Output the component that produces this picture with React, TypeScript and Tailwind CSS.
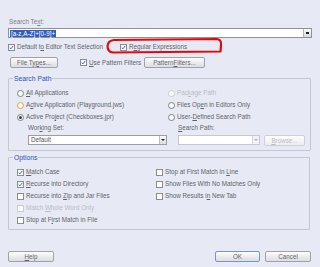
import React from 'react';

const font = { fontFamily: '"Liberation Sans", Arial, sans-serif' };

function Check() {
  return (
    <svg viewBox="0 0 7 7" className="w-[5px] h-[5px]">
      <path d="M1 3.6 L2.8 5.4 L6 1.2" fill="none" stroke="#2d55c8" strokeWidth="1.3" />
    </svg>
  );
}

function Checkbox({ checked = false, disabled = false }: { checked?: boolean; disabled?: boolean }) {
  return (
    <span
      className={`w-[7px] h-[7px] shrink-0 flex items-center justify-center bg-white border ${
        disabled ? 'border-[#c9ccd4]' : 'border-[#8a8d94]'
      }`}
    >
      {checked && <Check />}
    </span>
  );
}

function Radio({ on = false, hover = false, disabled = false }: { on?: boolean; hover?: boolean; disabled?: boolean }) {
  return (
    <span
      className={`w-[7px] h-[7px] shrink-0 rounded-full bg-white flex items-center justify-center border ${
        hover ? 'border-[#e0a826] border-[1.5px]' : disabled ? 'border-[#c9ccd4]' : 'border-[#7d8088]'
      }`}
    >
      {on && <span className="w-[3px] h-[3px] rounded-full bg-[#3a3d45]" />}
    </span>
  );
}

function Btn({ children, className = '', primary = false }: { children: React.ReactNode; className?: string; primary?: boolean }) {
  return (
    <div
      className={`h-[11px] flex items-center justify-center rounded-[2px] border bg-gradient-to-b from-[#fdfdfd] to-[#dcdde2] text-[6.3px] text-[#64666d] ${
        primary ? 'border-[#7e92c4]' : 'border-[#9fa2a8]'
      } ${className}`}
    >
      {children}
    </div>
  );
}

function Combo({ className = '', disabled = false, children }: { className?: string; disabled?: boolean; children?: React.ReactNode }) {
  return (
    <div className={`h-[10px] flex bg-white border ${disabled ? 'border-[#c5c8cf]' : 'border-[#9a9da4]'} ${className}`}>
      <div className="flex-1 flex items-center pl-[2px] text-[6.3px] text-[#54565d] overflow-hidden whitespace-nowrap">
        {children}
      </div>
      <div
        className={`w-[7px] flex items-center justify-center border-l ${
          disabled ? 'border-[#d6d8de] bg-[#f1f2f5]' : 'border-[#b8bbc2] bg-gradient-to-b from-[#fbfbfb] to-[#dcdde2]'
        }`}
      >
        <span
          className={`w-0 h-0 border-l-[2px] border-r-[2px] border-t-[2px] border-l-transparent border-r-transparent ${
            disabled ? 'border-t-[#b3b6bd]' : 'border-t-[#222]'
          }`}
        />
      </div>
    </div>
  );
}

function Row({ children, className = '' }: { children: React.ReactNode; className?: string }) {
  return <div className={`h-[12px] flex items-center gap-[2px] ${className}`}>{children}</div>;
}

function U({ children }: { children: React.ReactNode }) {
  return <span className="underline underline-offset-[1px]">{children}</span>;
}

export default function App() {
  return (
    <div
      style={font}
      className="relative w-[320px] h-[267px] overflow-hidden bg-[#e7eaf5] text-[6.3px] text-[#606269] pl-[8px] pt-[18px] flex flex-col"
    >
      <div className="h-[8px] leading-[8px] ml-[1px] text-[#7a7c83]">Search Te<U>x</U>t:</div>

      <div className="mt-[2px] w-[304px] h-[10px] flex bg-white border border-[#8f9298]">
        <div className="flex-1 flex items-center pl-[1px]">
          <span className="bg-[#2f5cc4] text-white px-[1px] leading-[7px]">[a-z,A-Z]+[0-9]+</span>
        </div>
        <div className="w-[8px] flex items-center justify-center border-l border-[#b6b9c0] bg-gradient-to-b from-[#fbfbfb] to-[#d9dae0]">
          <span className="w-[3px] h-[2px] bg-[#222]" />
        </div>
      </div>

      <div className="mt-[5px] h-[8px] flex items-center">
        <div className="flex items-center gap-[2px] w-[112px]">
          <Checkbox checked />
          <span>Default t<U>o</U> Editor Text Selection</span>
        </div>
        <div className="flex items-center gap-[2px]">
          <Checkbox checked />
          <span>R<U>e</U>gular Expressions</span>
        </div>
      </div>

      <div className="mt-[6px] flex items-center">
        <Btn className="ml-[2px] w-[48px]">File Ty<U>p</U>es...</Btn>
        <div className="ml-[22px] w-[64px] flex items-center gap-[2px]">
          <Checkbox checked />
          <span><U>U</U>se Pattern Filters</span>
        </div>
        <Btn className="w-[61px]">Pattern <U>F</U>ilters...</Btn>
      </div>

      {/* Search Path */}
      <div className="relative mt-[10px] w-[303px] h-[73px] border border-[#c3c7d2] rounded-[1px] pt-[8px] pl-[8px] flex">
        <span className="absolute -top-[5px] left-[4px] px-[1px] bg-[#e7eaf5] text-[6.8px] leading-[9px] text-[#2d4fb5]">
          Search Path
        </span>
        <div className="w-[151px] flex flex-col">
          <Row>
            <Radio />
            <span><U>A</U>ll Applications</span>
          </Row>
          <Row>
            <Radio hover />
            <span>A<U>c</U>tive Application (Playground.jws)</span>
          </Row>
          <Row>
            <Radio on />
            <span>Active Pro<U>j</U>ect (Checkboxes.jpr)</span>
          </Row>
          <div className="h-[9px] leading-[9px] pl-[11px]">Wor<U>k</U>ing Set:</div>
          <Combo className="mt-[3px] ml-[11px] w-[139px]">Default</Combo>
        </div>
        <div className="flex flex-col">
          <Row className="text-[#b9bcc4]">
            <Radio disabled />
            <span>Pac<U>k</U>age Path</span>
          </Row>
          <Row>
            <Radio />
            <span>Files Op<U>e</U>n in Editors Only</span>
          </Row>
          <Row>
            <Radio />
            <span>User-<U>D</U>efined Search Path</span>
          </Row>
          <div className="h-[9px] leading-[9px] pl-[10px]"><U>S</U>earch Path:</div>
          <div className="mt-[3px] ml-[10px] flex gap-[4px]">
            <Combo disabled className="w-[82px]" />
            <Btn className="w-[41px] h-[10px] text-[#b9bcc4] border-[#cdd0d6] from-[#f3f4f7] to-[#eceef2]">
              <U>B</U>rowse...
            </Btn>
          </div>
        </div>
      </div>

      {/* Options */}
      <div className="relative mt-[6px] w-[302px] h-[73px] border border-[#c3c7d2] rounded-[1px] pt-[8px] pl-[8px] flex">
        <span className="absolute -top-[5px] left-[4px] px-[1px] bg-[#e7eaf5] text-[6.8px] leading-[9px] text-[#2d4fb5]">
          Options
        </span>
        <div className="w-[139px] flex flex-col">
          <Row>
            <Checkbox checked />
            <span><U>M</U>atch Case</span>
          </Row>
          <Row>
            <Checkbox checked />
            <span><U>R</U>ecurse into Directory</span>
          </Row>
          <Row>
            <Checkbox />
            <span>Recurse into <U>Z</U>ip and Jar Files</span>
          </Row>
          <Row className="text-[#b9bcc4]">
            <Checkbox disabled />
            <span>Match <U>W</U>hole Word Only</span>
          </Row>
          <Row>
            <Checkbox />
            <span>Stop at F<U>i</U>rst Match in File</span>
          </Row>
        </div>
        <div className="flex flex-col">
          <Row>
            <Checkbox />
            <span>Stop at First Match in <U>L</U>ine</span>
          </Row>
          <Row>
            <Checkbox />
            <span>Show Files With No Matches Only</span>
          </Row>
          <Row>
            <Checkbox />
            <span>Show Results i<U>n</U> New Tab</span>
          </Row>
        </div>
      </div>

      <div className="mt-[21px] w-[303px] flex items-center">
        <Btn className="w-[46px]"><U>H</U>elp</Btn>
        <div className="flex-1" />
        <Btn primary className="w-[45px]">OK</Btn>
        <Btn className="ml-[5px] w-[46px]">Cancel</Btn>
      </div>

      {/* red marker annotation */}
      <svg className="absolute left-0 top-0 w-[320px] h-[267px] pointer-events-none" viewBox="0 0 320 267">
        <path
          d="M114 40 L217 39 Q221.5 39.5 221 45 L220.5 51.5 L113 52.5 Q107.5 52 107.5 46 Q108 40.5 114 40 Z"
          fill="none"
          stroke="#e10a0a"
          strokeWidth="2.2"
          strokeLinejoin="round"
        />
      </svg>
    </div>
  );
}
